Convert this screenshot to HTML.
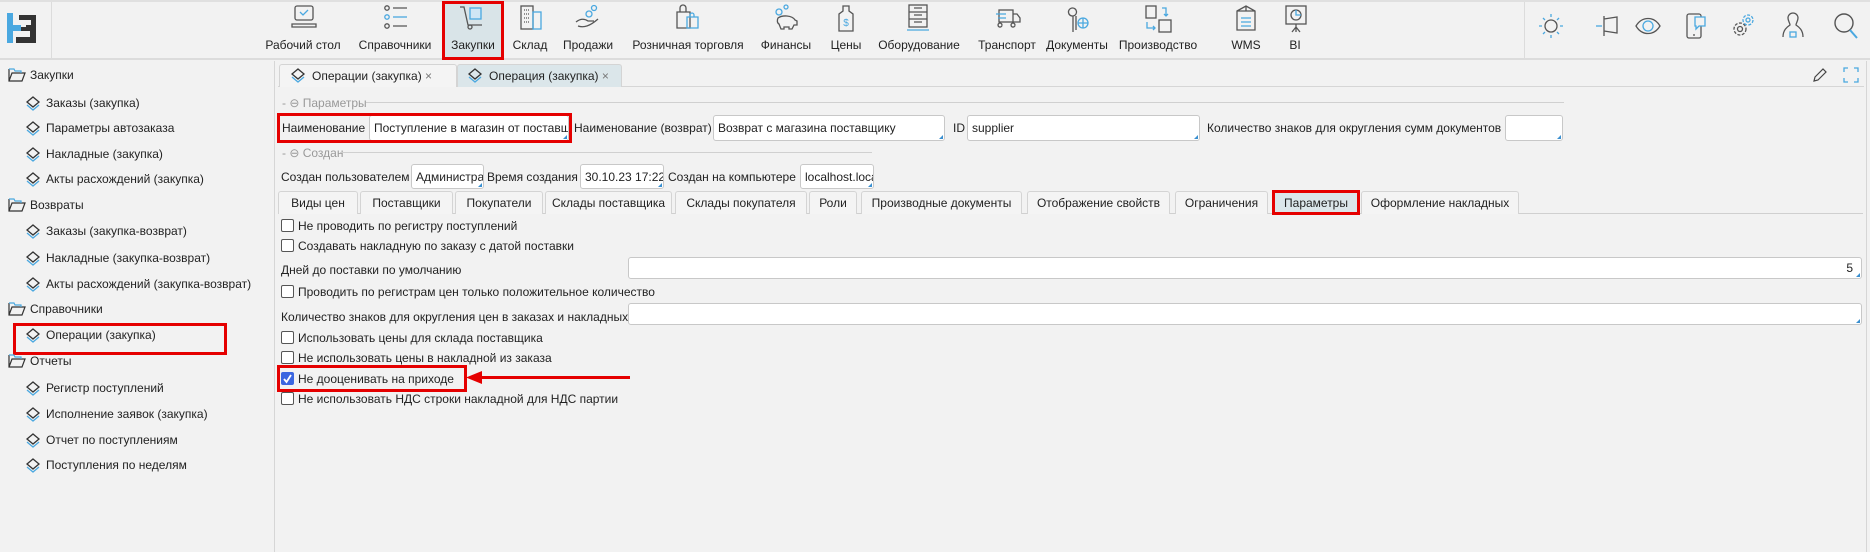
<!DOCTYPE html>
<html><head><meta charset="utf-8"><style>
*{box-sizing:border-box;margin:0;padding:0}
body{width:1870px;height:552px;overflow:hidden;background:#f2f2f2;font-family:"Liberation Sans",sans-serif;font-size:12px;color:#222;position:relative}
.a{position:absolute;white-space:nowrap}
.lbl{position:absolute;white-space:nowrap;transform:translateX(-50%);top:38px;font-size:12px}
.ic{position:absolute;top:4px}
.inp{position:absolute;background:#fff;border:1px solid #c8c8c8;border-radius:3px;overflow:hidden;white-space:nowrap;padding:5px 4px;font-size:12px}
.inp:after{content:"";position:absolute;right:1px;bottom:1px;border-left:4px solid transparent;border-bottom:4px solid #3a8fd0}
.tab{position:absolute;top:191px;height:23px;border:1px solid #d4d4d4;border-bottom:none;border-radius:3px 3px 0 0;background:#f4f4f4;text-align:center;line-height:22px;font-size:12px}
.cb{position:absolute;width:13px;height:13px;border:1px solid #555;border-radius:2px;background:#fff;left:281px}
.side{position:absolute;font-size:12px;white-space:nowrap}
.red{position:absolute;border:3px solid #e50000}
</style></head><body>
<div class="a" style="left:0;top:0;width:1870px;height:60px;background:#f2f2f2;border-bottom:2px solid #dcdcdc"></div>
<div class="a" style="left:0;top:0;width:1870px;height:2px;background:#e0e0e0"></div>
<svg class="a" style="left:7px;top:13px" width="30" height="30" viewBox="0 0 30 30"><rect x="0" y="0" width="6" height="30" fill="#4aa8e0"/><rect x="6" y="12" width="8" height="6" fill="#4aa8e0"/><path d="M12 2h17v14h-10v-4h5V7H12z" fill="#333"/><path d="M14 14h15v16H9v-6h14v-6h-9z" fill="#333"/></svg>
<div class="a" style="left:51px;top:2px;width:1px;height:57px;background:#dcdcdc"></div>
<div class="a" style="left:1524px;top:2px;width:1px;height:57px;background:#dcdcdc"></div>
<div class="a" style="left:444px;top:2px;width:58px;height:56px;background:#d9e4e8"></div>
<div class="red" style="left:442px;top:1px;width:62px;height:59px"></div>

<svg class="ic" style="left:290px" width="28" height="26" viewBox="0 0 28 26" fill="none" stroke="#555" stroke-width="1.3"><rect x="5" y="2" width="18" height="14" rx="2"/><path d="M2 20h24v3H2z" /><path d="M10 8l3 3 5-5" stroke="#4aa8e0"/></svg>
<svg class="ic" style="left:382px" width="28" height="26" viewBox="0 0 28 26" fill="none" stroke="#555" stroke-width="1.3"><circle cx="5" cy="4" r="2.2"/><circle cx="5" cy="13" r="2.2" stroke="#4aa8e0"/><circle cx="5" cy="22" r="2.2"/><path d="M11 4h14M11 22h14"/><path d="M11 13h14" stroke="#4aa8e0"/></svg>
<svg class="ic" style="left:458px" width="30" height="26" viewBox="0 0 30 26" fill="none" stroke="#555" stroke-width="1.3"><path d="M2 3h4l4 18h14"/><circle cx="12" cy="23" r="2"/><rect x="12" y="4" width="11" height="11" stroke="#4aa8e0" fill="#cfe6f5"/></svg>
<svg class="ic" style="left:518px" width="26" height="28" viewBox="0 0 26 28" fill="none" stroke="#555" stroke-width="1.3"><rect x="3" y="2" width="12" height="23"/><rect x="15" y="8" width="8" height="17" stroke="#4aa8e0"/><path d="M6 6h6M6 10h6M6 14h6M6 18h6" stroke-dasharray="1 1"/></svg>
<svg class="ic" style="left:574px" width="28" height="26" viewBox="0 0 28 26" fill="none" stroke="#555" stroke-width="1.3"><circle cx="20" cy="4" r="2.5" stroke="#4aa8e0"/><circle cx="15" cy="10" r="3" stroke="#4aa8e0"/><path d="M2 18c5-4 9-3 12-1h6M4 22c6 2 12 0 20-7"/></svg>
<svg class="ic" style="left:674px" width="28" height="28" viewBox="0 0 28 28" fill="none" stroke="#555" stroke-width="1.3"><path d="M3 8h13v16H3zM6 8V4a3 3 0 016 0v4"/><path d="M13 13h11v11H13zM16 13v-2a2 2 0 014 0v2" stroke="#4aa8e0"/></svg>
<svg class="ic" style="left:772px" width="28" height="28" viewBox="0 0 28 28" fill="none" stroke="#555" stroke-width="1.3"><circle cx="7" cy="8" r="3" stroke="#4aa8e0"/><circle cx="14" cy="3" r="2" stroke="#4aa8e0"/><path d="M6 14c4-3 14-3 17 2l2 1v4h-3l-2 4h-3v-2h-5v2H9l-2-5c-2-1-2-4-1-6z"/></svg>
<svg class="ic" style="left:836px" width="20" height="30" viewBox="0 0 20 30" fill="none" stroke="#555" stroke-width="1.3"><path d="M7 2h6v5l4 3v17H3V10l4-3z"/><text x="10" y="22" font-size="10" fill="#4aa8e0" stroke="none" text-anchor="middle" font-family="Liberation Sans">$</text></svg>
<svg class="ic" style="left:904px" width="28" height="28" viewBox="0 0 28 28" fill="none" stroke="#555" stroke-width="1.3"><rect x="5" y="1" width="18" height="22"/><path d="M5 8h18M5 15h18M10 4h8M10 11h8M10 18h8"/><path d="M3 26h22" stroke="#4aa8e0"/></svg>
<svg class="ic" style="left:994px" width="28" height="26" viewBox="0 0 28 26" fill="none" stroke="#555" stroke-width="1.3"><rect x="5" y="6" width="14" height="12"/><path d="M19 10h4l3 4v4h-7M8 21a2 2 0 100 .1M21 21a2 2 0 100 .1"/><path d="M2 10h10M4 14h8" stroke="#4aa8e0"/></svg>
<svg class="ic" style="left:1064px" width="28" height="30" viewBox="0 0 28 30" fill="none" stroke="#555" stroke-width="1.3"><path d="M9 28V12a4 4 0 10-1-8 4 4 0 001 8M12 12v14"/><circle cx="19" cy="19" r="5" stroke="#4aa8e0"/><path d="M14 19h10M19 14v10" stroke="#4aa8e0"/></svg>
<svg class="ic" style="left:1144px" width="30" height="30" viewBox="0 0 30 30" fill="none" stroke="#555" stroke-width="1.3"><rect x="2" y="2" width="10" height="12"/><rect x="15" y="16" width="12" height="12"/><path d="M18 4h4v8M20 10l2 2 2-2M3 18v6h8M9 22l2 2-2 2" stroke="#4aa8e0"/></svg>
<svg class="ic" style="left:1234px" width="24" height="28" viewBox="0 0 24 28" fill="none" stroke="#555" stroke-width="1.3"><path d="M3 7l9-5 9 5v19H3zM3 7h18M12 2v5"/><path d="M7 14h10M7 18h10M7 22h10" stroke="#4aa8e0"/></svg>
<svg class="ic" style="left:1284px" width="24" height="30" viewBox="0 0 24 30" fill="none" stroke="#555" stroke-width="1.3"><rect x="2" y="2" width="20" height="18"/><path d="M12 20v8M8 28l4-5 4 5"/><circle cx="12" cy="11" r="5"/><path d="M12 6v5h5" stroke="#4aa8e0"/></svg>

<div class="lbl" style="left:303px">Рабочий стол</div>
<div class="lbl" style="left:395px">Справочники</div>
<div class="lbl" style="left:473px">Закупки</div>
<div class="lbl" style="left:530px">Склад</div>
<div class="lbl" style="left:588px">Продажи</div>
<div class="lbl" style="left:688px">Розничная торговля</div>
<div class="lbl" style="left:786px">Финансы</div>
<div class="lbl" style="left:846px">Цены</div>
<div class="lbl" style="left:919px">Оборудование</div>
<div class="lbl" style="left:1007px">Транспорт</div>
<div class="lbl" style="left:1077px">Документы</div>
<div class="lbl" style="left:1158px">Производство</div>
<div class="lbl" style="left:1246px">WMS</div>
<div class="lbl" style="left:1295px">BI</div>

<svg class="a" style="left:1538px;top:13px" width="26" height="26" viewBox="0 0 26 26" fill="none" stroke="#555" stroke-width="1.3"><circle cx="13" cy="13" r="6"/><path d="M13 1v3M13 22v3M1 13h3M22 13h3M5 5l2 2M19 19l2 2M5 21l2-2M19 7l2-2" stroke="#4aa8e0"/></svg>
<svg class="a" style="left:1594px;top:13px" width="26" height="26" viewBox="0 0 26 26" fill="none" stroke="#555" stroke-width="1.3"><path d="M10 3v20M10 6l13-2v16l-13-2"/><path d="M2 13h6" stroke="#4aa8e0"/></svg>
<svg class="a" style="left:1634px;top:13px" width="28" height="26" viewBox="0 0 28 26" fill="none" stroke="#555" stroke-width="1.3"><path d="M2 13c6-10 18-10 24 0-6 10-18 10-24 0z"/><circle cx="14" cy="13" r="5" stroke="#4aa8e0"/></svg>
<svg class="a" style="left:1684px;top:11px" width="24" height="30" viewBox="0 0 24 30" fill="none" stroke="#555" stroke-width="1.3"><rect x="3" y="3" width="14" height="24" rx="2"/><path d="M9 24h2"/><path d="M11 6h10v9h-6l-3 3v-3h-1z" stroke="#4aa8e0" fill="#f2f2f2"/></svg>
<svg class="a" style="left:1730px;top:11px" width="28" height="30" viewBox="0 0 28 30" fill="none" stroke="#555" stroke-width="1.3"><circle cx="10" cy="18" r="6" stroke-dasharray="3 1.5"/><circle cx="10" cy="18" r="2.5"/><circle cx="18" cy="9" r="5" stroke="#4aa8e0" stroke-dasharray="3 1.5"/><circle cx="18" cy="9" r="2" stroke="#4aa8e0"/></svg>
<svg class="a" style="left:1780px;top:11px" width="26" height="30" viewBox="0 0 26 30" fill="none" stroke="#555" stroke-width="1.3"><path d="M13 2a5 5 0 00-5 5c0 3 2 5 2 7-3 2-7 5-7 12M13 2a5 5 0 015 5c0 3-2 5-2 7 3 2 7 5 7 12"/><rect x="10" y="21" width="6" height="5" stroke="#4aa8e0"/></svg>
<svg class="a" style="left:1832px;top:11px" width="28" height="30" viewBox="0 0 28 30" fill="none" stroke="#555" stroke-width="1.4"><circle cx="12" cy="12" r="9"/><path d="M18 19l7 8" stroke="#4aa8e0" stroke-width="2"/></svg>

<div class="a" style="left:274px;top:61px;width:1px;height:491px;background:#d6d6d6"></div>
<div class="a" style="left:1866px;top:61px;width:1px;height:491px;background:#d6d6d6"></div>
<svg width="0" height="0" style="position:absolute"><defs>
<symbol id="fo" viewBox="0 0 18 14"><path d="M1 1v12h13l3-8H4L1 13" fill="none" stroke="#333" stroke-width="1.2"/><path d="M1 1h5l1 2h6v2" fill="none" stroke="#4aa8e0" stroke-width="1.2"/></symbol>
<symbol id="dm" viewBox="0 0 16 16"><path d="M8 2l6 5-6 5-6-5z" fill="none" stroke="#333" stroke-width="1.3"/><path d="M2 10l6 5 6-5" fill="none" stroke="#4aa8e0" stroke-width="1.3"/></symbol>
</defs></svg>
<svg class="a" style="left:8px;top:68px" width="18" height="14"><use href="#fo"/></svg><div class="side" style="left:30px;top:68px">Закупки</div>
<svg class="a" style="left:25px;top:95px" width="16" height="16"><use href="#dm"/></svg><div class="side" style="left:46px;top:96px">Заказы (закупка)</div>
<svg class="a" style="left:25px;top:120px" width="16" height="16"><use href="#dm"/></svg><div class="side" style="left:46px;top:121px">Параметры автозаказа</div>
<svg class="a" style="left:25px;top:146px" width="16" height="16"><use href="#dm"/></svg><div class="side" style="left:46px;top:147px">Накладные (закупка)</div>
<svg class="a" style="left:25px;top:171px" width="16" height="16"><use href="#dm"/></svg><div class="side" style="left:46px;top:172px">Акты расхождений (закупка)</div>
<svg class="a" style="left:8px;top:198px" width="18" height="14"><use href="#fo"/></svg><div class="side" style="left:30px;top:198px">Возвраты</div>
<svg class="a" style="left:25px;top:223px" width="16" height="16"><use href="#dm"/></svg><div class="side" style="left:46px;top:224px">Заказы (закупка-возврат)</div>
<svg class="a" style="left:25px;top:250px" width="16" height="16"><use href="#dm"/></svg><div class="side" style="left:46px;top:251px">Накладные (закупка-возврат)</div>
<svg class="a" style="left:25px;top:276px" width="16" height="16"><use href="#dm"/></svg><div class="side" style="left:46px;top:277px">Акты расхождений (закупка-возврат)</div>
<svg class="a" style="left:8px;top:302px" width="18" height="14"><use href="#fo"/></svg><div class="side" style="left:30px;top:302px">Справочники</div>
<svg class="a" style="left:25px;top:327px" width="16" height="16"><use href="#dm"/></svg><div class="side" style="left:46px;top:328px">Операции (закупка)</div>
<div class="red" style="left:13px;top:323px;width:214px;height:32px"></div>
<svg class="a" style="left:8px;top:354px" width="18" height="14"><use href="#fo"/></svg><div class="side" style="left:30px;top:354px">Отчеты</div>
<svg class="a" style="left:25px;top:380px" width="16" height="16"><use href="#dm"/></svg><div class="side" style="left:46px;top:381px">Регистр поступлений</div>
<svg class="a" style="left:25px;top:406px" width="16" height="16"><use href="#dm"/></svg><div class="side" style="left:46px;top:407px">Исполнение заявок (закупка)</div>
<svg class="a" style="left:25px;top:432px" width="16" height="16"><use href="#dm"/></svg><div class="side" style="left:46px;top:433px">Отчет по поступлениям</div>
<svg class="a" style="left:25px;top:457px" width="16" height="16"><use href="#dm"/></svg><div class="side" style="left:46px;top:458px">Поступления по неделям</div>

<div class="a" style="left:278px;top:86px;width:1586px;height:1px;background:#d6d6d6"></div>
<div class="a" style="left:279px;top:64px;width:178px;height:23px;border:1px solid #d4d4d4;border-bottom:none;border-radius:3px 3px 0 0;background:#f4f4f4"></div>
<svg class="a" style="left:290px;top:67px" width="16" height="16"><use href="#dm"/></svg><div class="a" style="left:312px;top:69px">Операции (закупка) <span style="color:#777">×</span></div>
<div class="a" style="left:457px;top:64px;width:165px;height:23px;border:1px solid #d4d4d4;border-bottom:none;border-radius:3px 3px 0 0;background:#dbe6ea"></div>
<svg class="a" style="left:467px;top:67px" width="16" height="16"><use href="#dm"/></svg><div class="a" style="left:489px;top:69px">Операция (закупка) <span style="color:#777">×</span></div>
<svg class="a" style="left:1812px;top:67px" width="16" height="16" viewBox="0 0 16 16" fill="none" stroke="#444" stroke-width="1.2"><path d="M2 14l1-4 8-8 3 3-8 8z"/></svg>
<svg class="a" style="left:1843px;top:67px" width="16" height="16" viewBox="0 0 16 16" fill="none" stroke="#4aa8e0" stroke-width="1.3"><path d="M1 5V1h4M11 1h4v4M15 11v4h-4M5 15H1v-4"/></svg>

<div class="a" style="left:282px;top:96px;color:#999">- ⊖ Параметры</div>
<div class="a" style="left:366px;top:102px;width:1198px;height:1px;background:#d0d0d0"></div>
<div class="a" style="left:282px;top:121px">Наименование</div>
<div class="inp" style="left:369px;top:115px;width:200px;height:26px">Поступление в магазин от поставщика</div>
<div class="red" style="left:277px;top:113px;width:295px;height:30px"></div>
<div class="a" style="left:574px;top:121px">Наименование (возврат)</div>
<div class="inp" style="left:713px;top:115px;width:232px;height:26px">Возврат с магазина поставщику</div>
<div class="a" style="left:953px;top:121px">ID</div>
<div class="inp" style="left:967px;top:115px;width:233px;height:26px">supplier</div>
<div class="a" style="left:1207px;top:121px">Количество знаков для округления сумм документов</div>
<div class="inp" style="left:1505px;top:115px;width:58px;height:26px"></div>

<div class="a" style="left:282px;top:146px;color:#999">- ⊖ Создан</div>
<div class="a" style="left:340px;top:152px;width:532px;height:1px;background:#d0d0d0"></div>
<div class="a" style="left:281px;top:170px">Создан пользователем</div>
<div class="inp" style="left:411px;top:164px;width:73px;height:25px">Администратор</div>
<div class="a" style="left:487px;top:170px">Время создания</div>
<div class="inp" style="left:580px;top:164px;width:84px;height:25px">30.10.23 17:22</div>
<div class="a" style="left:668px;top:170px">Создан на компьютере</div>
<div class="inp" style="left:800px;top:164px;width:74px;height:25px">localhost.localdomain</div>

<div class="a" style="left:278px;top:213px;width:1585px;height:1px;background:#d0d0d0"></div>
<div class="tab" style="left:278px;width:80px">Виды цен</div>
<div class="tab" style="left:360px;width:93px">Поставщики</div>
<div class="tab" style="left:455px;width:88px">Покупатели</div>
<div class="tab" style="left:545px;width:127px">Склады поставщика</div>
<div class="tab" style="left:675px;width:132px">Склады покупателя</div>
<div class="tab" style="left:809px;width:48px">Роли</div>
<div class="tab" style="left:861px;width:161px">Производные документы</div>
<div class="tab" style="left:1027px;width:143px">Отображение свойств</div>
<div class="tab" style="left:1175px;width:93px">Ограничения</div>
<div class="tab" style="left:1273px;width:86px;background:#dbe6ea">Параметры</div>
<div class="red" style="left:1272px;top:190px;width:88px;height:25px"></div>
<div class="tab" style="left:1361px;width:158px">Оформление накладных</div>

<div class="cb" style="top:219px"></div><div class="a" style="left:298px;top:219px">Не проводить по регистру поступлений</div>
<div class="cb" style="top:239px"></div><div class="a" style="left:298px;top:239px">Создавать накладную по заказу с датой поставки</div>
<div class="a" style="left:281px;top:263px">Дней до поставки по умолчанию</div>
<div class="inp" style="left:628px;top:257px;width:1234px;height:22px;text-align:right;padding:3px 8px">5</div>
<div class="cb" style="top:285px"></div><div class="a" style="left:298px;top:285px">Проводить по регистрам цен только положительное количество</div>
<div class="a" style="left:281px;top:310px">Количество знаков для округления цен в заказах и накладных</div>
<div class="inp" style="left:628px;top:303px;width:1234px;height:22px"></div>
<div class="cb" style="top:331px"></div><div class="a" style="left:298px;top:331px">Использовать цены для склада поставщика</div>
<div class="cb" style="top:351px"></div><div class="a" style="left:298px;top:351px">Не использовать цены в накладной из заказа</div>
<div class="cb" style="top:372px;background:#3b66e0;border-color:#3b66e0"><svg width="11" height="11" viewBox="0 0 11 11" style="position:absolute;left:0;top:0"><path d="M2 6l2.5 3L9 2" fill="none" stroke="#fff" stroke-width="1.8"/></svg></div><div class="a" style="left:298px;top:372px">Не дооценивать на приходе</div>
<div class="red" style="left:277px;top:365px;width:190px;height:27px"></div>
<div class="a" style="left:478px;top:376px;width:152px;height:3px;background:#e50000"></div>
<svg class="a" style="left:466px;top:370px" width="16" height="15"><path d="M0 7.5L16 1v13z" fill="#e50000"/></svg>
<div class="cb" style="top:392px"></div><div class="a" style="left:298px;top:392px">Не использовать НДС строки накладной для НДС партии</div>
</body></html>
